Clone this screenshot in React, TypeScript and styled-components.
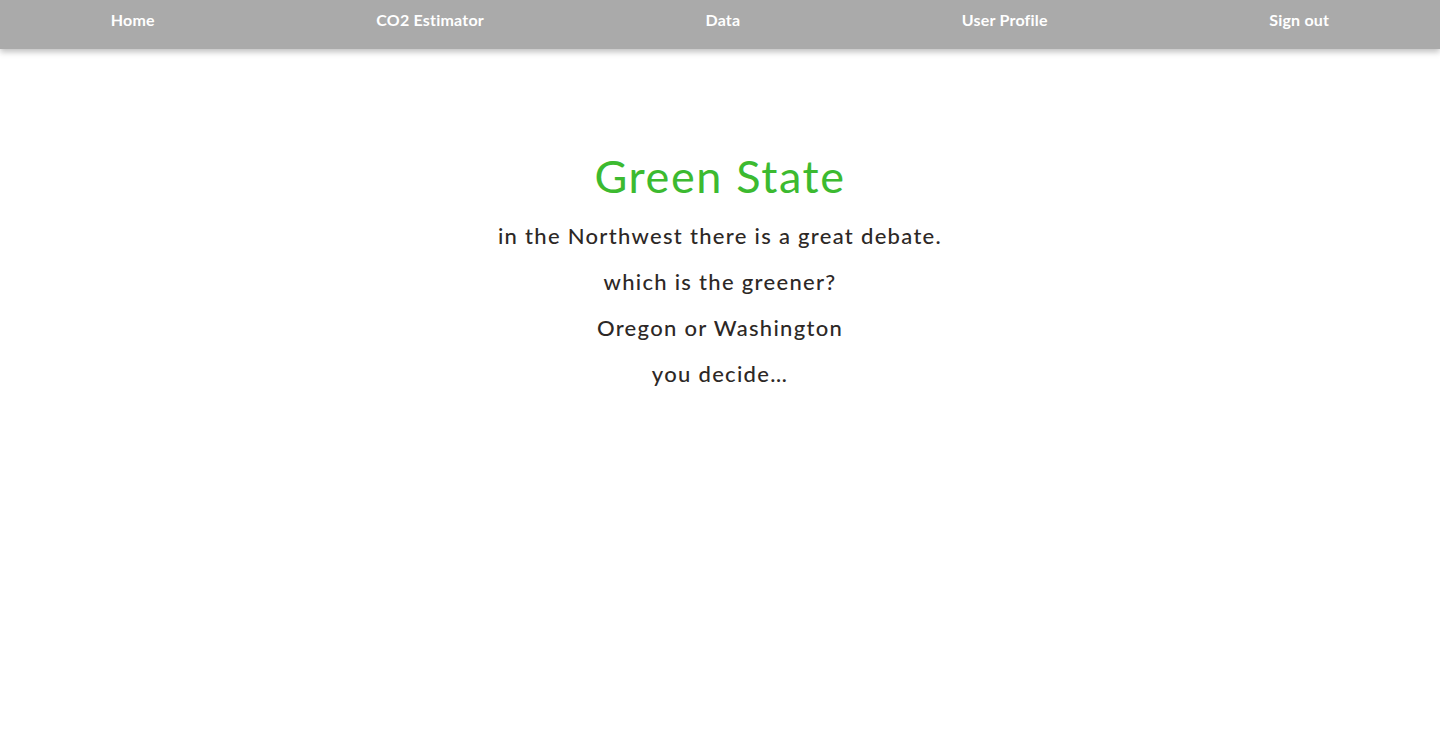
import React from "react"
import styled, { createGlobalStyle } from "styled-components"

const GlobalStyle = createGlobalStyle`
  body {
    margin: 0;
    background: #ffffff;
    font-family: Lato, "Noto Sans", sans-serif;
  }
`

const NavBar = styled.nav`
  display: flex;
  justify-content: space-around;
  align-items: flex-start;
  height: 49px;
  padding-top: 10px;
  box-sizing: border-box;
  background: #aaaaaa;
  box-shadow: 0 3px 6px rgba(0, 0, 0, 0.25);
`

const NavLink = styled.a`
  color: #ffffff;
  font-size: 16px;
  font-weight: 700;
  line-height: 20px;
  letter-spacing: 0.2px;
  text-decoration: none;
  cursor: pointer;
`

const Main = styled.main`
  display: flex;
  flex-direction: column;
  align-items: center;
  padding-top: 95px;
  text-align: center;
`

const Title = styled.h1`
  margin: 0 0 5px;
  color: #3cba30;
  font-size: 45px;
  font-weight: 400;
  line-height: 64px;
  letter-spacing: 1.6px;
`

const Line = styled.p`
  margin: 0;
  color: #2d2826;
  font-size: 22px;
  font-weight: 500;
  line-height: 46px;
  letter-spacing: 1.3px;
`

const links = ["Home", "CO2 Estimator", "Data", "User Profile", "Sign out"]
const lines = [
  "in the Northwest there is a great debate.",
  "which is the greener?",
  "Oregon or Washington",
  "you decide…",
]

export default function App() {
  return (
    <>
      <GlobalStyle />
      <NavBar>
        {links.map(link => (
          <NavLink key={link}>{link}</NavLink>
        ))}
      </NavBar>
      <Main>
        <Title>Green State</Title>
        {lines.map(line => (
          <Line key={line}>{line}</Line>
        ))}
      </Main>
    </>
  )
}
